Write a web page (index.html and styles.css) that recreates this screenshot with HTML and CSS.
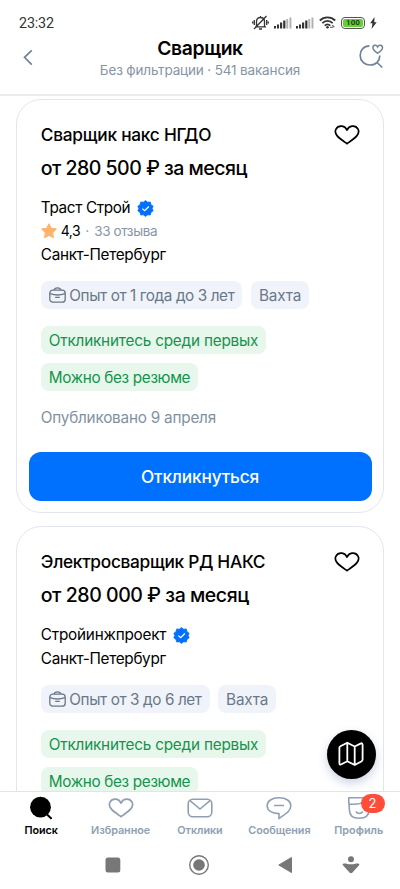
FILE: index.html
```html
<!DOCTYPE html>
<html lang="ru">
<head>
<meta charset="utf-8">
<meta name="viewport" content="width=device-width, initial-scale=1">
<title>Сварщик</title>
<link rel="stylesheet" href="styles.css">
</head>
<body>
<svg class="defs" width="0" height="0" aria-hidden="true">
  <symbol id="heart" viewBox="0 0 26 20"><path d="M13 18.7C10 16.6 5.700 13.900 3.200 10.900C1.300 8.600.900 6.100 2 4.100C3.200 1.800 5.500.900 8 1.200C10.400 1.500 12 3 13 5.100C14 3 15.600 1.500 18 1.200C20.500.900 22.800 1.800 24 4.100C25.100 6.100 24.700 8.600 22.800 10.900C20.300 13.900 16 16.600 13 18.700Z" fill="none" stroke="currentColor" stroke-width="1.7" stroke-linejoin="round"/></symbol>
  <symbol id="verified" viewBox="0 0 18 18"><path d="M9 .6l2.300 1.700 2.800-.2.700 2.800 2.300 1.700L16.100 9l1 2.500-2.300 1.700-.7 2.700-2.800-.2L9 17.400l-2.300-1.700-2.800.2-.7-2.700L.900 11.500 1.900 9 .9 6.600l2.300-1.700.7-2.800 2.800.2z" fill="#0070ff" stroke="#0070ff" stroke-width=".8" stroke-linejoin="round"/><path d="M5.600 9.100l2.500 2.300 4.500-4.500" fill="none" stroke="#fff" stroke-width="1.300"/></symbol>
  <symbol id="case" viewBox="0 0 17 16"><g fill="none" stroke="currentColor" stroke-width="1.300"><rect x=".8" y="3.200" width="15.400" height="12" rx="3"/><path d="M5 3.200C5.400 1.500 6.300.8 8.500.8S11.600 1.500 12 3.200M1 6.600C5.500 8.300 11.500 8.300 16 6.600M6.200 10.400H10.800"/></g></symbol>
  <symbol id="signal" viewBox="0 0 18 12"><g fill="#333"><rect x="0" y="9" width="2" height="2.500"/><rect x="3" y="7.500" width="2" height="4"/><rect x="6" y="5.500" width="2.200" height="6"/><rect x="9.200" y="3.500" width="2.200" height="8"/></g><path d="M12.300 2h1.900v9.500h-1.900zM15.500.5h1.900v11h-1.900z" fill="#b0b0b0"/></symbol>
</svg>

<header class="top">
  <div class="status">
    <span class="clock">23:32</span>
    <svg class="st-bell" width="17" height="16" viewBox="0 0 17 16"><g fill="none" stroke="#333" stroke-width="1.300"><path d="M4.500 11.500V6.500C4.500 3.800 6 2.500 8.500 2.500S12.500 3.800 12.500 6.500V11.500M3 11.800H14M7 14h3M8.500 1v1.500M2 14L14.500 1M2.300 5v5M.7 6.500v2M14.700 5v5M16.300 6.500v2"/></g></svg>
    <svg class="st-sig" width="18" height="12"><use href="#signal"/></svg>
    <svg class="st-sig2" width="18" height="12"><use href="#signal"/></svg>
    <svg class="st-wifi" width="18" height="13" viewBox="0 0 18 13"><g fill="none" stroke="#333" stroke-width="1.800"><path d="M.8 4.500C5 .2 12 .2 16.200 4.500M3.300 7.200C6.300 4.200 10.700 4.200 13.700 7.200M5.700 9.700C7.500 8 9.500 8 11.300 9.700"/></g><circle cx="8.500" cy="11.300" r="1.300" fill="#333"/><path d="M11 11.300h3.500M13 9.300l2.500 1.500" stroke="#777" stroke-width="1.300"/></svg>
    <span class="battery"><span class="charge">100</span></span>
    <svg class="st-bolt" width="7" height="12" viewBox="0 0 7 12"><path d="M4.500 0L.2 6.300h2.300L1.500 12 6.700 5.300H4.300z" fill="#333"/></svg>
  </div>
  <div class="bar">
    <svg class="back" width="10" height="17" viewBox="0 0 10 17"><path d="M8.800 1.300L1.500 8.300l7.300 7.300" fill="none" stroke="#708499" stroke-width="1.700"/></svg>
    <div class="heading">
      <h1>Сварщик</h1>
      <p>Без фильтрации · 541 вакансия</p>
    </div>
    <svg class="saved" width="25" height="25" viewBox="0 0 25 25"><g fill="none" stroke="#708499" stroke-width="1.700"><path d="M10.500 1.900C4.800 2 1.200 6 1.200 11.400S5.200 21 11 21c6 0 9.800-4 9.800-9.500M17.500 18l5.800 5.500"/><path d="M18.600 9.200C16.400 7.600 13.900 6 13.900 3.700 13.900.9 17.500.5 18.600 3c1.100-2.500 4.900-2.100 4.900.7 0 2.300-2.600 3.900-4.900 5.500Z" stroke-width="1.500"/></g></svg>
  </div>
</header>

<main class="feed">
  <article class="card">
    <div class="title-row"><h2 class="t-one">Сварщик накс НГДО</h2><svg class="like" width="26" height="20"><use href="#heart"/></svg></div>
    <p class="salary">от 280 500 ₽ за месяц</p>
    <div class="info">
      <p class="company"><span class="c-one">Траст Строй</span><svg width="17" height="17"><use href="#verified"/></svg></p>
      <p class="rating"><svg width="16" height="16" viewBox="0 0 16 16"><path d="M8 1l2.100 4.300 4.900.7-3.500 3.500.8 5L8 12.200l-4.300 2.300.8-5L1 6l4.900-.7z" fill="#ffb36b" stroke="#ffb36b" stroke-width="1.300" stroke-linejoin="round"/></svg><b>4,3</b><i>·</i><span>33 отзыва</span></p>
      <p class="city">Санкт-Петербург</p>
    </div>
    <div class="tags"><span class="tag exp"><svg width="17" height="16"><use href="#case"/></svg>Опыт от 1 года до 3 лет</span><span class="tag shift">Вахта</span></div>
    <div class="perks"><span class="perk first">Откликнитесь среди первых</span><span class="perk cv">Можно без резюме</span></div>
    <p class="date">Опубликовано 9 апреля</p>
    <button class="apply">Откликнуться</button>
  </article>

  <article class="card">
    <div class="title-row"><h2 class="t-two">Электросварщик РД НАКС</h2><svg class="like" width="26" height="20"><use href="#heart"/></svg></div>
    <p class="salary wide">от 280 000 ₽ за месяц</p>
    <div class="info">
      <p class="company"><span class="c-two">Стройинжпроект</span><svg width="17" height="17"><use href="#verified"/></svg></p>
      <p class="city">Санкт-Петербург</p>
    </div>
    <div class="tags"><span class="tag exp"><svg width="17" height="16"><use href="#case"/></svg>Опыт от 3 до 6 лет</span><span class="tag shift">Вахта</span></div>
    <div class="perks"><span class="perk first">Откликнитесь среди первых</span><span class="perk cv">Можно без резюме</span></div>
  </article>
</main>

<button class="map" aria-label="Карта"><svg width="26" height="26" viewBox="0 0 26 26"><path d="M9.300 1.700L2.400 5.200Q1.400 5.700 1.400 6.800V22Q1.400 24.300 3.400 23.300L9.300 20.300L16.700 24L23.300 20.500Q24.600 19.800 24.600 18.500V4Q24.600 1.500 22.500 2.600L16.700 5.500ZM9.300 1.700V20.300M16.700 5.500V24" fill="none" stroke="#fff" stroke-width="1.800" stroke-linejoin="round"/></svg></button>

<footer>
  <nav class="tabs">
    <a class="active"><svg width="22" height="24" viewBox="0 0 22 24"><circle cx="10.500" cy="11.200" r="10.400" fill="#000"/><path d="M16 17.500l5.500 5.200" stroke="#000" stroke-width="2"/></svg><span>Поиск</span></a>
    <a><svg width="26" height="20"><use href="#heart"/></svg><span>Избранное</span></a>
    <a><svg width="26" height="20" viewBox="0 0 26 20"><g fill="none" stroke="currentColor" stroke-width="1.600"><rect x="1.200" y="1.200" width="23.600" height="17.600" rx="4.500"/><path d="M3 2.700L13 11 23 2.700"/></g></svg><span>Отклики</span></a>
    <a><svg width="26" height="24" viewBox="0 0 26 24"><path d="M13 22.500V17.600C5.500 17.600 1.200 14.300 1.200 9.700S5.800 1.800 13 1.800 24.800 5.100 24.800 9.700C24.800 15.500 18.500 18.500 13 22.500ZM8 9.500H18" fill="none" stroke="currentColor" stroke-width="1.600" stroke-linejoin="round"/></svg><span>Сообщения</span></a>
    <a class="profile"><svg width="24" height="24" viewBox="0 0 24 24"><g fill="none" stroke="currentColor" stroke-width="1.600" stroke-linejoin="round"><path d="M1.800 1.800H18C21 1.800 22 4 22 7.500V14C22 19.500 18 22.300 12.200 22.300S2.400 19.500 2.400 14C2.400 10 1.500 6 1.800 1.800ZM2.300 8C8 8.500 14 8 17 5.500"/><path d="M9 15.500C10.500 18.200 14.200 18.200 15.700 15.500"/></g></svg><em>2</em><span>Профиль</span></a>
  </nav>
  <div class="system">
    <svg width="16" height="16"><rect x=".5" y=".5" width="14.800" height="15" rx="2.500" fill="#777"/></svg>
    <svg width="20" height="20"><circle cx="10" cy="10" r="9.300" fill="none" stroke="#777" stroke-width="1.400"/><circle cx="10" cy="10" r="5.800" fill="#777"/></svg>
    <svg width="16" height="18" viewBox="0 0 16 18"><path d="M14.500 1.500V16.500L1.800 9z" fill="#777" stroke="#777" stroke-linejoin="round"/></svg>
    <svg width="18" height="18" viewBox="0 0 18 18"><circle cx="9" cy="3.200" r="3" fill="#777"/><path d="M1.200 7.700C3.500 7.100 5.500 8.300 9 8.300S14.500 7.100 16.800 7.700C17.500 8 17.500 9.100 16.800 9.500L10.500 16.500Q9 18 7.500 16.500L1.200 9.500C.5 9.100.5 8 1.200 7.700Z" fill="#777"/></svg>
  </div>
</footer>
</body>
</html>
```

FILE: styles.css
```css
* { box-sizing: border-box; }
body { margin: 0; width: 400px; height: 889px; overflow: hidden; display: flex; flex-direction: column; position: relative; background: #fff; color: #000; font-family: Inter, "Liberation Sans", sans-serif; }
h1, h2, p { margin: 0; font-weight: 400; white-space: nowrap; }
svg { display: block; flex: none; }
button { border: 0; padding: 0; font-family: inherit; }
.defs { position: absolute; }

.top { height: 96px; flex: none; border-bottom: 2px solid #e9edf2; }
.status { height: 36px; padding: 9px 23px 0 19px; display: flex; align-items: center; }
.clock { margin-right: auto; font: 14.3px/20px Roboto, sans-serif; letter-spacing: -.15px; color: #333; }
.st-bell { margin-right: 5px; }
.st-sig { margin-right: 4px; }
.st-sig2 { margin-right: 5px; }
.st-wifi { margin-right: 4px; }
.battery { width: 24px; height: 12px; margin-right: 5px; padding: 1px; border: 1px solid #555; border-radius: 4px; }
.charge { display: block; height: 8px; border-radius: 2px; background: #65cf36; font: 700 8px/8px Roboto, sans-serif; text-align: center; color: #263d1c; }
.bar { display: flex; justify-content: space-between; padding: 0 16px; }
.back { margin: 13px 8px 0 7px; }
.heading { text-align: center; }
.heading h1 { font-size: 19.300px; line-height: 24px; font-weight: 600; letter-spacing: -.35px; }
.heading p { margin-top: 1px; font-size: 13.500px; line-height: 19px; letter-spacing: -.15px; color: #8795a5; }
.saved { margin-top: 8px; }

.feed { flex: 1; min-height: 0; overflow: hidden; padding: 3px 16px 0; }
.card { height: 414px; padding: 23px 11.500px 0; margin-bottom: 13px; border: 1.500px solid #e3e6ed; border-radius: 25px; }
.card > :not(.apply) { margin-left: 12.300px; }
.title-row { display: flex; justify-content: space-between; align-items: center; height: 24px; padding-right: 11.500px; }
h2 { font-size: 17.300px; line-height: 24px; font-weight: 500; }
.t-one { letter-spacing: -.25px; }
.t-two { letter-spacing: -.3px; }
.salary { margin-top: 7px; font-size: 19.500px; line-height: 28px; font-weight: 500; letter-spacing: -.52px; }
.salary.wide { letter-spacing: -.46px; }
.info { margin-top: 14px; font-size: 15.300px; line-height: 24px; }
.company, .rating { display: flex; align-items: center; }
.company { gap: 6.500px; }
.c-one { letter-spacing: -.36px; }
.c-two { letter-spacing: -.22px; }
.city { letter-spacing: -.32px; }
.rating { height: 23px; padding-bottom: 2px; font-size: 14px; }
.rating b { margin-left: 4px; font-weight: 400; letter-spacing: -.5px; }
.rating i { margin: 0 5px; font-style: normal; color: #8795a5; }
.rating span { font-size: 13.500px; letter-spacing: -.4px; color: #8795a5; }
.tags { display: flex; gap: 8.500px; margin-top: 14px; }
.tag, .perk { display: flex; align-items: center; height: 28px; padding: 0 8px; border-radius: 8px; font-size: 15.300px; white-space: nowrap; }
.tag { background: #f0f3f9; color: #697889; }
.tag svg { margin-right: 3.500px; }
.exp { letter-spacing: -.4px; }
.shift { letter-spacing: -.15px; }
.perks { display: flex; flex-direction: column; align-items: flex-start; gap: 9px; margin-top: 17px; }
.perk { background: #e7f7eb; color: #14934d; }
.first { letter-spacing: -.2px; }
.cv { letter-spacing: -.34px; }
.date { margin-top: 15px; font-size: 15.300px; line-height: 24px; letter-spacing: -.22px; color: #8291a2; }
.apply { display: block; width: 343px; height: 49px; margin-top: 22px; border-radius: 12px; background: #0070ff; color: #fff; font-size: 17.300px; font-weight: 500; letter-spacing: -.17px; }

.map { position: absolute; left: 326.500px; top: 729.500px; width: 49px; height: 49px; border-radius: 50%; background: #000; display: grid; place-items: center; box-shadow: 0 4px 10px rgba(50, 80, 140, .25); }

footer { height: 98px; flex: none; border-top: 1.500px solid #dfe5ec; background: #fff; position: relative; }
.tabs { display: grid; grid-template-columns: repeat(5, 79.400px); padding-left: 1.500px; height: 48px; }
.tabs a { display: grid; grid-template-rows: 32px 14px; justify-items: center; align-items: center; font-size: 10.800px; line-height: 14px; font-weight: 600; letter-spacing: -.05px; color: #8fa0b3; position: relative; white-space: nowrap; }
.tabs .active { color: #000; }
.tabs em { position: absolute; left: 41.500px; top: 1.500px; width: 24px; height: 19px; border-radius: 10px; background: #ff4d3a; color: #fff; font-size: 13px; line-height: 19px; font-weight: 400; font-style: normal; text-align: center; }
.profile span { letter-spacing: .05px; }
.system { display: grid; grid-template-columns: 87px 86px 86px 45px; margin-left: 69px; height: 48px; justify-items: center; align-items: center; padding-top: 1px; }
```
